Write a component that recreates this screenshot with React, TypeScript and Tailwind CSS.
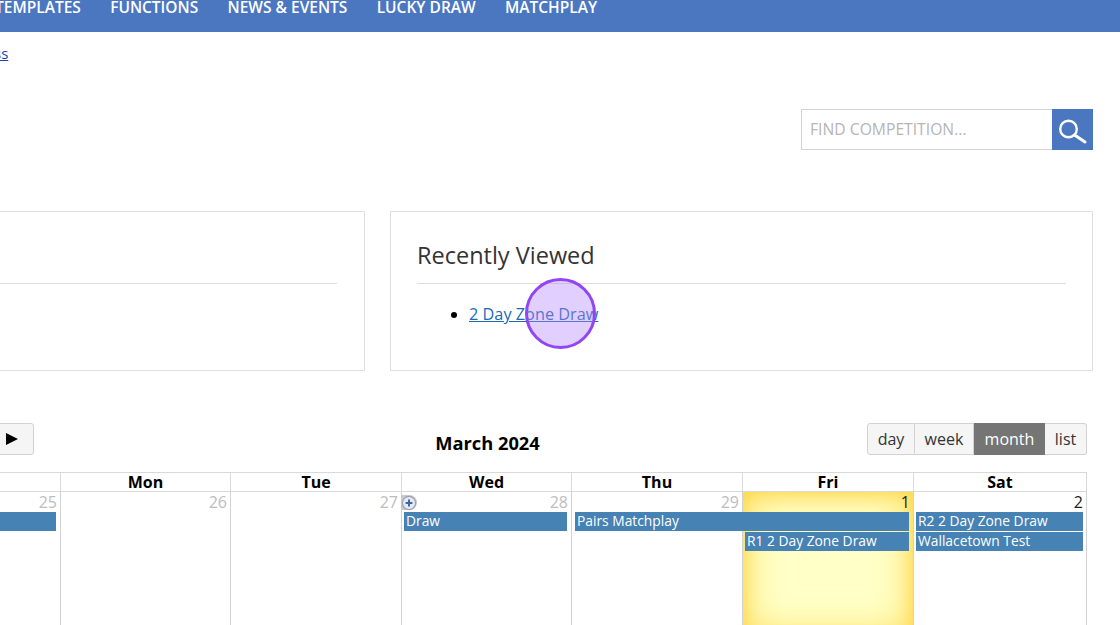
const headers = ["Sun", "Mon", "Tue", "Wed", "Thu", "Fri", "Sat"];
const cols = "grid-cols-[171px_170px_171px_170px_171px_171px_173px]";

const days = [
  { n: "25", col: "col-start-1", cls: "", num: "text-[#bdbdbd]" },
  { n: "26", col: "col-start-2", cls: "", num: "text-[#bdbdbd]" },
  { n: "27", col: "col-start-3", cls: "", num: "text-[#bdbdbd]" },
  { n: "28", col: "col-start-4", cls: "", num: "text-[#bdbdbd]" },
  { n: "29", col: "col-start-5", cls: "", num: "text-[#bdbdbd]" },
  { n: "1", col: "col-start-6", cls: "bg-[#ffffc8] shadow-[inset_0_0_40px_#ffd84d,inset_0_0_16px_#ffd84d]", num: "text-[#222]" },
  { n: "2", col: "col-start-7", cls: "", num: "text-[#222]" },
];

function Event({ className, title }: { className: string; title?: string }) {
  return (
    <div className={`h-[19px] bg-[#4682b4] pl-[2px] text-[13.8px] leading-[18px] text-white whitespace-nowrap overflow-hidden ${className}`}>
      {title}
    </div>
  );
}

export default function App() {
  return (
    <div className="relative w-[1120px] h-[625px] overflow-hidden bg-white font-['Open_Sans',sans-serif] text-[#222]">
      {/* nav bar, scrolled so the text is cut at the top */}
      <div className="h-[32px] bg-[#4b77c1] overflow-hidden">
        <ul className="flex gap-[29.3px] -mt-[3px] -ml-[5px] text-[15.5px] leading-[20px] font-semibold text-white whitespace-nowrap">
          <li>TEMPLATES</li>
          <li>FUNCTIONS</li>
          <li>NEWS &amp; EVENTS</li>
          <li>LUCKY DRAW</li>
          <li>MATCHPLAY</li>
        </ul>
      </div>

      <div className="h-[77px] pt-[11px] -ml-[6px] text-[15px] leading-[20px]">
        <a href="#" className="underline text-[#1d3fb0]">ss</a>
      </div>

      <div className="flex justify-end pr-[27px]">
        <div className="w-[251px] h-[41px] border border-[#d4d4d4] border-r-0 pl-[8px] text-[15.7px] leading-[38px] text-[#b5b5b5] whitespace-nowrap">
          FIND COMPETITION...
        </div>
        <button className="w-[41px] h-[41px] bg-[#4b77c1]">
          <svg viewBox="0 0 41 41" className="w-[41px] h-[41px]" fill="none" stroke="#fff">
            <circle cx="16.5" cy="20" r="8.3" strokeWidth="2.4" />
            <path d="M22.6 26 L33 33" strokeWidth="3" strokeLinecap="round" />
          </svg>
        </button>
      </div>

      <div className="flex gap-[25px] mt-[61px] -ml-[339px] w-[1432px]">
        <section className="w-[704px] h-[160px] border border-[#dedede] pl-[26px] pr-[27px] pt-[25px]">
          <div className="h-[47px] border-b border-[#dedede]"></div>
        </section>
        <section className="w-[703px] h-[160px] border border-[#dedede] px-[26px] pt-[25px]">
          <h2 className="h-[47px] border-b border-[#dedede] text-[23.5px] leading-[36px] text-[#333]">Recently Viewed</h2>
          <ul className="list-disc ml-[52px] mt-[19px] text-[16.3px] leading-[22px] text-black">
            <li>
              <a href="#" className="underline text-[#1a6ab5]">2 Day Zone Draw</a>
            </li>
          </ul>
        </section>
      </div>

      {/* toolbar */}
      <div className="relative h-[32px] mt-[52px] -ml-[110px] w-[1197px] flex items-center justify-between">
        <div className="flex ml-[80px]">
          <button className="w-[64px] h-[32px] bg-[#f5f5f5] border border-[#d2d2d2] rounded-r-[3px] flex items-center justify-end pr-[15px]">
            <svg viewBox="0 0 12 12" className="w-[12px] h-[12px]">
              <polygon points="0,0 12,6 0,12" fill="#000" />
            </svg>
          </button>
        </div>
        <h2 className="text-[18.3px] font-bold leading-[25px] text-black ml-[74px] mt-[6px]">March 2024</h2>
        <div className="flex text-[16px] leading-[30px] h-[32px] text-[#333] text-center">
          <span className="w-[48px] bg-[#f5f5f5] border border-[#d2d2d2] rounded-l-[3px]">day</span>
          <span className="w-[59px] bg-[#f5f5f5] border-y border-r border-[#d2d2d2]">week</span>
          <span className="w-[71px] bg-[#757575] border-y border-[#757575] text-white">month</span>
          <span className="w-[42px] bg-[#f5f5f5] border border-l-0 border-[#d2d2d2] rounded-r-[3px]">list</span>
        </div>
      </div>

      {/* calendar */}
      <div className="mt-[17px] -ml-[110px] w-[1197px]">
        <div className={`grid ${cols} border-t border-[#d9d9d9] h-[20px]`}>
          {headers.map((h, i) => (
            <div
              key={h}
              className={`text-center text-[16px] font-bold leading-[18px] text-black border-r border-b border-[#d9d9d9] ${i === 0 ? "border-l" : ""}`}
            >
              {h}
            </div>
          ))}
        </div>
        <div className={`grid ${cols} grid-rows-[20px_20px_20px_85px] h-[145px]`}>
          {days.map((d, i) => (
            <div
              key={d.n}
              className={`${d.col} row-start-1 row-end-5 border-r border-[#d2d2d2] ${i === 0 ? "border-l" : ""} ${d.cls}`}
            ></div>
          ))}
          {days.map((d) => (
            <div
              key={d.n}
              className={`${d.col} row-start-1 text-right pr-[4px] text-[16px] leading-[21px] ${d.num}`}
            >
              {d.n}
            </div>
          ))}
          <div className="col-start-4 row-start-1 self-start justify-self-start mt-[3px] ml-[-1px] w-[16px] h-[15px] bg-[#c9c9c9] rounded-tr-[8px] rounded-br-[8px]">
            <svg viewBox="0 0 16 16" className="w-[16px] h-[16px]">
              <circle cx="8" cy="8" r="6.6" fill="#e6eaf3" stroke="#9aa0ad" strokeWidth="1.2" />
              <path d="M8 4.6v6.8M4.6 8h6.8" stroke="#3f63ad" strokeWidth="2" />
            </svg>
          </div>

          <Event className="col-start-1 row-start-2 mr-[5px]" />
          <Event className="col-start-4 row-start-2 ml-[2px] mr-[5px]" title="Draw" />
          <Event className="col-start-5 col-end-7 row-start-2 ml-[3px] mr-[5px]" title="Pairs Matchplay" />
          <Event className="col-start-7 row-start-2 ml-[2px] mr-[4px]" title="R2 2 Day Zone Draw" />
          <Event className="col-start-6 row-start-3 ml-[2px] mr-[5px]" title="R1 2 Day Zone Draw" />
          <Event className="col-start-7 row-start-3 ml-[2px] mr-[4px]" title="Wallacetown Test" />
        </div>
      </div>

      {/* click marker from the screen recorder */}
      <div className="absolute left-[525px] top-[278px] w-[71px] h-[71px] rounded-full border-[3px] border-[#9146f5] bg-[#b388ff]/40"></div>
    </div>
  );
}
